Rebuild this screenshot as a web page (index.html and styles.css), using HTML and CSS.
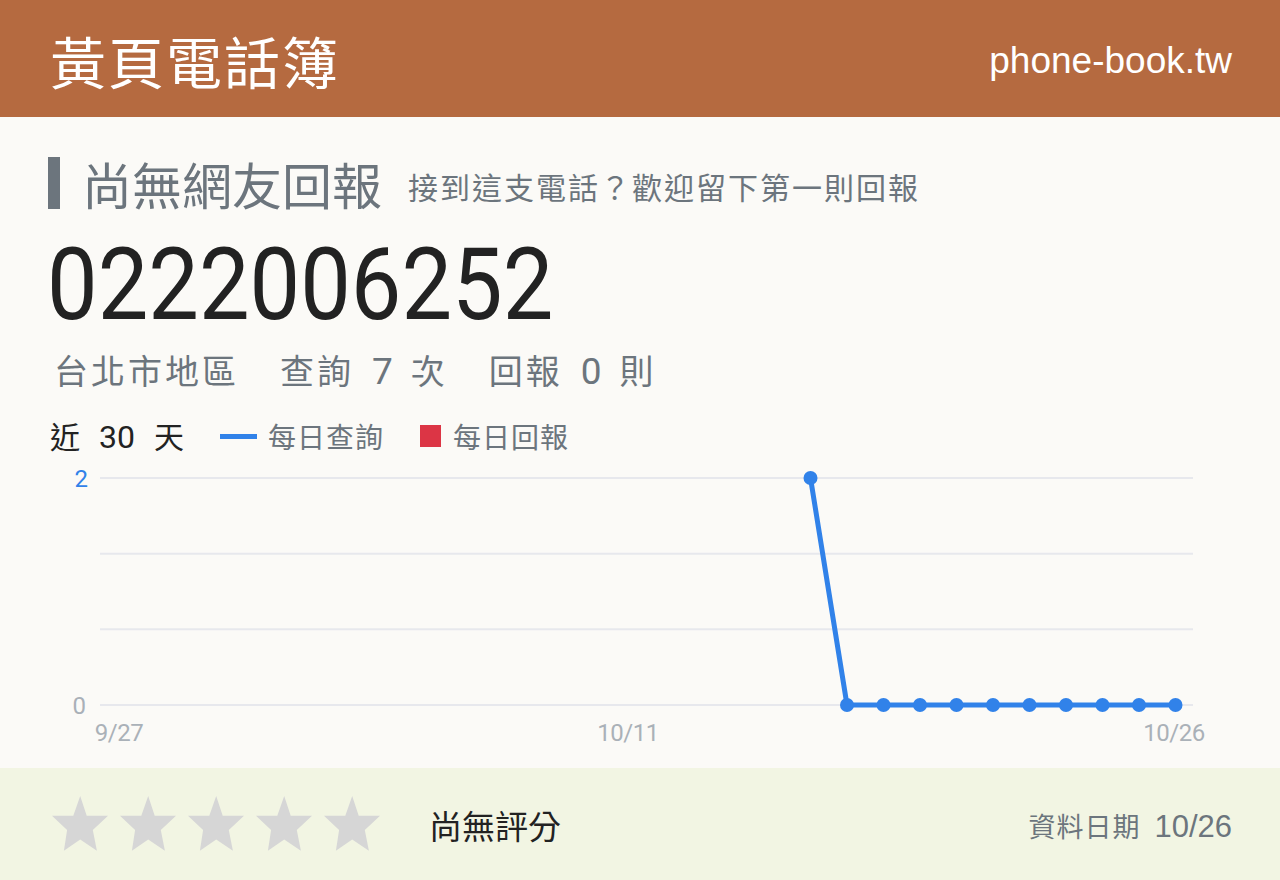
FILE: index.html
```html
<!DOCTYPE html>
<html lang="zh-Hant">
<head>
<meta charset="utf-8">
<title>0222006252 - 黃頁電話簿</title>
<link rel="stylesheet" href="styles.css">
</head>
<body>
<header class="topbar">
  <div class="brand">黃頁電話簿</div>
  <div class="domain">phone-book.tw</div>
</header>
<main class="main">
  <div class="heading">
    <span class="heading-bar"></span>
    <h1 class="heading-title">尚無網友回報</h1>
    <span class="heading-sub">接到這支電話？歡迎留下第一則回報</span>
  </div>
  <div class="phone"><span class="phone-digits">0222006252</span></div>
  <div class="stats"><span class="stat-group">台北市地區</span><span class="stat-group">查詢<span class="num">7</span>次</span><span class="stat-group">回報<span class="num">0</span>則</span></div>
  <div class="legend">
    <span class="legend-title">近<span class="legend-num">30</span>天</span>
    <span class="legend-item"><span class="swatch-line"></span>每日查詢</span>
    <span class="legend-item"><span class="swatch-box"></span>每日回報</span>
  </div>
  <svg class="chart" width="1184" height="308" viewBox="48 460 1184 308" xmlns="http://www.w3.org/2000/svg">
    <g class="grid">
      <line x1="100" y1="476" x2="1193" y2="476"/>
      <line x1="100" y1="551.7" x2="1193" y2="551.7"/>
      <line x1="100" y1="627.3" x2="1193" y2="627.3"/>
      <line x1="100" y1="703" x2="1193" y2="703"/>
    </g>
    <text class="ylabel ylabel-blue" x="88" y="485" text-anchor="end">2</text>
    <text class="ylabel" x="86" y="712" text-anchor="end">0</text>
    <text class="xlabel" x="119" y="739" text-anchor="middle">9/27</text>
    <text class="xlabel" x="628" y="739" text-anchor="middle">10/11</text>
    <text class="xlabel" x="1174" y="739" text-anchor="middle">10/26</text>
    <polyline class="series" points="810.5,476 847,703 883.5,703 920,703 956.5,703 993,703 1029.5,703 1066,703 1102.5,703 1139,703 1175.5,703"/>
    <g class="markers">
      <circle cx="810.5" cy="476" r="7"/>
      <circle cx="847" cy="703" r="7"/>
      <circle cx="883.5" cy="703" r="7"/>
      <circle cx="920" cy="703" r="7"/>
      <circle cx="956.5" cy="703" r="7"/>
      <circle cx="993" cy="703" r="7"/>
      <circle cx="1029.5" cy="703" r="7"/>
      <circle cx="1066" cy="703" r="7"/>
      <circle cx="1102.5" cy="703" r="7"/>
      <circle cx="1139" cy="703" r="7"/>
      <circle cx="1175.5" cy="703" r="7"/>
    </g>
  </svg>
</main>
<footer class="footer">
  <div class="stars">
    <svg class="star" width="56" height="55" viewBox="0 0 56 55"><polygon points="28.2,0 34.7,19.8 56,19.8 40.8,34.1 44.9,54.7 28.2,43.4 11.9,54.7 15.1,34.1 0,19.8 21.3,19.8"/></svg>
    <svg class="star" width="56" height="55" viewBox="0 0 56 55"><polygon points="28.2,0 34.7,19.8 56,19.8 40.8,34.1 44.9,54.7 28.2,43.4 11.9,54.7 15.1,34.1 0,19.8 21.3,19.8"/></svg>
    <svg class="star" width="56" height="55" viewBox="0 0 56 55"><polygon points="28.2,0 34.7,19.8 56,19.8 40.8,34.1 44.9,54.7 28.2,43.4 11.9,54.7 15.1,34.1 0,19.8 21.3,19.8"/></svg>
    <svg class="star" width="56" height="55" viewBox="0 0 56 55"><polygon points="28.2,0 34.7,19.8 56,19.8 40.8,34.1 44.9,54.7 28.2,43.4 11.9,54.7 15.1,34.1 0,19.8 21.3,19.8"/></svg>
    <svg class="star" width="56" height="55" viewBox="0 0 56 55"><polygon points="28.2,0 34.7,19.8 56,19.8 40.8,34.1 44.9,54.7 28.2,43.4 11.9,54.7 15.1,34.1 0,19.8 21.3,19.8"/></svg>
  </div>
  <div class="rating">尚無評分</div>
  <div class="date"><span class="date-label">資料日期</span><span class="date-value">10/26</span></div>
</footer>
</body>
</html>
```

FILE: styles.css
```css
html, body {
  margin: 0;
  padding: 0;
}
body {
  width: 1280px;
  height: 880px;
  overflow: hidden;
  background: #fbfaf7;
  font-family: "Noto Sans CJK TC", "Noto Sans", sans-serif;
  color: #222;
}
.topbar {
  height: 117px;
  background: #b56a40;
  color: #fff;
  display: flex;
  align-items: center;
  justify-content: space-between;
  padding: 0 48px 0 50px;
  box-sizing: border-box;
}
.brand {
  font-size: 56px;
  letter-spacing: 2px;
  line-height: 1;
  padding-top: 2px;
}
.domain {
  font-family: "Liberation Sans", Arial, sans-serif;
  font-size: 37px;
  line-height: 1;
  padding-top: 4px;
}
.main {
  padding: 40px 48px 0;
  height: 651px;
  box-sizing: border-box;
}
.heading {
  display: flex;
  align-items: center;
  height: 52px;
}
.heading-bar {
  width: 12px;
  height: 52px;
  background: #6c757d;
  margin-right: 22px;
}
.heading-title {
  margin: 0;
  font-weight: 400;
  font-size: 50px;
  line-height: 52px;
  color: #6c757d;
}
.heading-sub {
  margin-left: 26px;
  font-size: 30px;
  letter-spacing: 2px;
  color: #6c757d;
  line-height: 1;
  padding-top: 6px;
}
.phone {
  margin-top: 26px;
  height: 100px;
  white-space: nowrap;
}
.phone-digits {
  display: inline-block;
  font-family: Roboto, "Liberation Sans", sans-serif;
  font-size: 101px;
  line-height: 100px;
  letter-spacing: 0;
  color: #222;
  transform: scaleX(0.892);
  transform-origin: left center;
  margin-left: -1px;
}
.stats {
  margin-top: 18px;
  display: flex;
  gap: 41px;
  font-size: 34px;
  line-height: 34px;
  letter-spacing: 3px;
  color: #6c757d;
  padding-left: 6px;
}
.num {
  font-family: Roboto, "Noto Sans", sans-serif;
  font-weight: 400;
  font-size: 37px;
  letter-spacing: 0;
  margin: 0 18px 0 18px;
}
.legend {
  margin-top: 31px;
  display: flex;
  align-items: center;
  height: 32px;
  line-height: 32px;
}
.legend-title {
  font-size: 30px;
  color: #222;
  margin-right: 36px;
  padding-left: 2px;
}
.legend-num {
  font-family: Roboto, "Noto Sans", sans-serif;
  font-size: 32px;
  margin: 0 19px 0 19px;
}
.legend-item {
  display: flex;
  align-items: center;
  font-size: 28px;
  letter-spacing: 1px;
  color: #6c757d;
  margin-right: 36px;
}
.swatch-line {
  width: 37px;
  height: 5px;
  background: #3182e9;
  margin-right: 11px;
}
.swatch-box {
  width: 21px;
  height: 22px;
  background: #dc3545;
  margin-right: 12px;
}
.chart {
  display: block;
  margin-top: 10px;
}
.grid line {
  stroke: #e7e8ed;
  stroke-width: 2;
}
.ylabel {
  font-family: Roboto, "Liberation Sans", sans-serif;
  font-size: 24px;
  fill: #a9b0b8;
}
.ylabel-blue {
  fill: #3182e9;
}
.xlabel {
  font-family: Roboto, "Liberation Sans", sans-serif;
  font-size: 24px;
  fill: #aab1b8;
  letter-spacing: -0.5px;
}
.series {
  fill: none;
  stroke: #3182e9;
  stroke-width: 5;
  stroke-linejoin: round;
}
.markers circle {
  fill: #3182e9;
}
.footer {
  height: 112px;
  background: #f2f5e3;
  display: flex;
  align-items: center;
  padding: 0 48px 0 52px;
  box-sizing: border-box;
}
.stars {
  display: flex;
  gap: 12px;
  margin-top: -2px;
}
.star polygon {
  fill: #d6d6d6;
}
.rating {
  margin-left: 49px;
  font-size: 33px;
  color: #222;
  line-height: 1;
  padding-top: 2px;
}
.date {
  margin-left: auto;
  display: flex;
  align-items: baseline;
  color: #6c757d;
  padding-top: 2px;
}
.date-label {
  font-size: 27px;
  letter-spacing: 1px;
  margin-right: 14px;
}
.date-value {
  font-family: "Liberation Sans", Arial, sans-serif;
  font-size: 31px;
}
```
